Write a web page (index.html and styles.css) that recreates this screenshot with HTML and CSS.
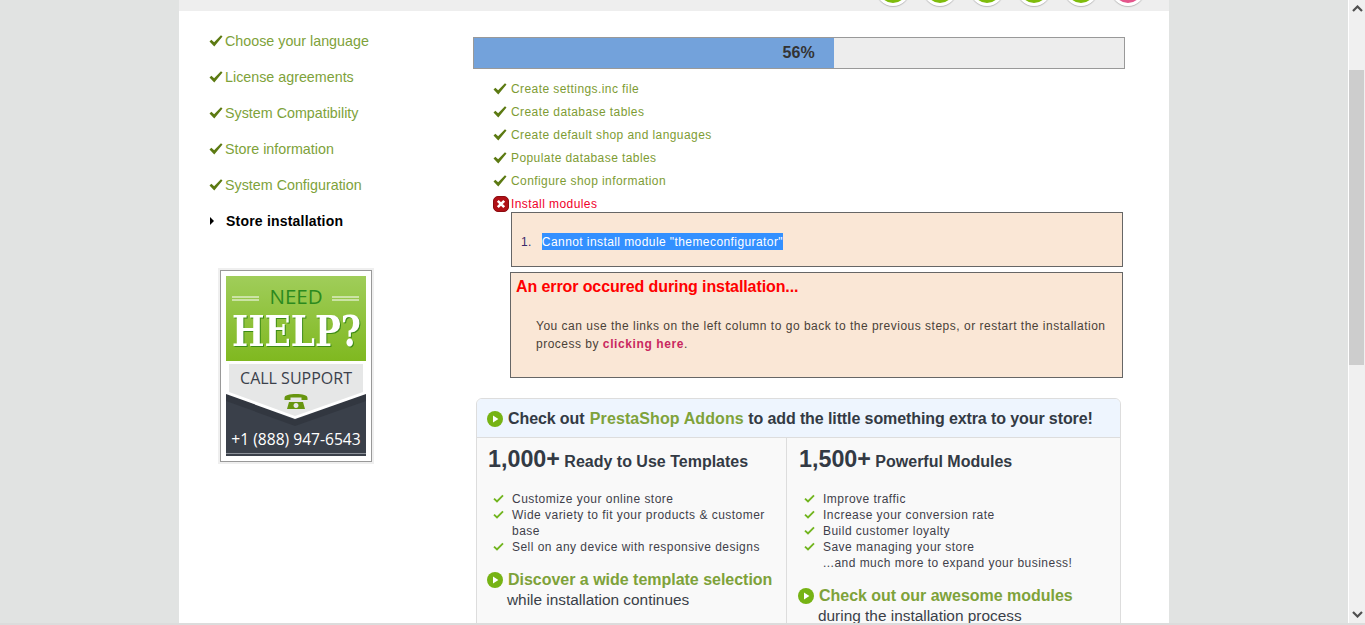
FILE: index.html
```html
<!DOCTYPE html>
<html lang="en">
<head>
<meta charset="utf-8">
<title>PrestaShop Installation</title>
<link rel="stylesheet" href="styles.css">
</head>
<body>
<svg class="defs" width="0" height="0" aria-hidden="true">
  <defs>
    <symbol id="check" viewBox="0 0 16 14"><path d="M0.4 7.6 L2.6 5.6 L5.8 8.4 L13.8 0.4 L15.6 1.8 L6 13.4 Z" fill="#5c7a12"/></symbol>
    <symbol id="tick" viewBox="0 0 11 9"><path d="M1 4.6 L4 7.4 L10 1.4" fill="none" stroke="#72b51f" stroke-width="1.9"/></symbol>
    <symbol id="play" viewBox="0 0 16 16"><circle cx="8" cy="8" r="8" fill="#76b314"/><path d="M6 4.6 L11.4 8 L6 11.4 Z" fill="#fff"/></symbol>
  </defs>
</svg>
<div class="viewport">
  <div class="stage">
    <div class="page">
      <div class="topbar">
        <span class="dot"></span><span class="dot"></span><span class="dot"></span><span class="dot"></span><span class="dot"></span><span class="dot dot-pink"></span>
      </div>
      <div class="columns">
        <aside class="sidebar">
          <ul class="nav">
            <li class="nav-item"><svg class="nav-check"><use href="#check"/></svg>Choose your language</li>
            <li class="nav-item"><svg class="nav-check"><use href="#check"/></svg>License agreements</li>
            <li class="nav-item"><svg class="nav-check"><use href="#check"/></svg>System Compatibility</li>
            <li class="nav-item"><svg class="nav-check"><use href="#check"/></svg>Store information</li>
            <li class="nav-item"><svg class="nav-check"><use href="#check"/></svg>System Configuration</li>
            <li class="nav-item nav-current"><span class="arrow"></span>Store installation</li>
          </ul>
          <div class="help-frame">
            <svg class="help" viewBox="0 0 140 180" width="140" height="180" role="img" aria-label="Need help? Call support">
              <defs>
                <linearGradient id="g" x1="0" y1="0" x2="0" y2="1"><stop offset="0" stop-color="#a0cd5a"/><stop offset="1" stop-color="#7fb81f"/></linearGradient>
              </defs>
              <rect width="140" height="180" fill="#3a404a"/>
              <rect width="140" height="86" fill="url(#g)"/>
              <path d="M6 21h27M6 24h27M106 21h27M106 24h27" stroke="#fff" stroke-width="1"/>
              <text x="70" y="28" class="need">NEED</text>
              <text x="70.500" y="70" class="helpword" textLength="129" lengthAdjust="spacingAndGlyphs">HELP?</text>
              <path d="M0 117 L69 144 L140 117 L140 125 L69 150 L0 125Z" fill="#323740"/>
              <path d="M0 85H140V118L69 143L0 118Z" fill="#fff"/>
              <path d="M3 88H137V116L69 140L3 116Z" fill="#e6e7e7"/>
              <text x="70" y="108" class="call">CALL SUPPORT</text>
              <path d="M58.500 122c0-3 5-4 11.500-4s11.500 1 11.500 4v2h-6v-2.500h-11v2.500h-6zM63 126h14l2 7h-18zM70 127a2.500 2.500 0 1 0 .01 0z" fill="#67950f" fill-rule="evenodd"/>
              <text x="70" y="169" class="phone">+1 (888) 947-6543</text>
              <rect y="177" width="140" height="1" fill="#8d929a"/>
            </svg>
          </div>
        </aside>
        <main class="content">
          <div class="progress"><div class="progress-fill"><span class="progress-label">56%</span></div></div>
          <ul class="steps">
            <li class="step"><svg class="step-icon"><use href="#check"/></svg>Create settings.inc file</li>
            <li class="step"><svg class="step-icon"><use href="#check"/></svg>Create database tables</li>
            <li class="step"><svg class="step-icon"><use href="#check"/></svg>Create default shop and languages</li>
            <li class="step"><svg class="step-icon"><use href="#check"/></svg>Populate database tables</li>
            <li class="step"><svg class="step-icon"><use href="#check"/></svg>Configure shop information</li>
            <li class="step step-error">
              <svg class="err-icon" viewBox="0 0 16 16"><rect x=".5" y=".5" width="15" height="15" rx="4.500" fill="#b01016" stroke="#8a0c10"/><path d="M4.800 4.800l6.400 6.400M11.200 4.800l-6.400 6.400" stroke="#fff" stroke-width="2.600"/></svg>Install modules
            </li>
          </ul>
          <div class="error-list">
            <ol class="error-items"><li><span class="selected">Cannot install module "themeconfigurator"</span></li></ol>
          </div>
          <div class="error-box">
            <h2 class="error-title">An error occured during installation...</h2>
            <p class="error-text">You can use the links on the left column to go back to the previous steps, or restart the installation process by <a class="error-link">clicking here</a>.</p>
          </div>
          <section class="addons">
            <header class="addons-head"><svg class="play"><use href="#play"/></svg><span>Check out <b class="green">PrestaShop Addons</b> to add the little something extra to your store!</span></header>
            <div class="addons-body">
              <div class="addon-col addon-col-first">
                <h3 class="addon-title"><span class="big">1,000+</span> Ready to Use Templates</h3>
                <ul class="ticks">
                  <li class="tick"><svg class="tick-icon"><use href="#tick"/></svg>Customize your online store</li>
                  <li class="tick"><svg class="tick-icon"><use href="#tick"/></svg>Wide variety to fit your products &amp; customer base</li>
                  <li class="tick"><svg class="tick-icon"><use href="#tick"/></svg>Sell on any device with responsive designs</li>
                </ul>
                <div class="cta"><svg class="play"><use href="#play"/></svg><div><div class="cta-main">Discover a wide template selection</div><div class="cta-sub">while installation continues</div></div></div>
              </div>
              <div class="addon-col">
                <h3 class="addon-title"><span class="big">1,500+</span> Powerful Modules</h3>
                <ul class="ticks">
                  <li class="tick"><svg class="tick-icon"><use href="#tick"/></svg>Improve traffic</li>
                  <li class="tick"><svg class="tick-icon"><use href="#tick"/></svg>Increase your conversion rate</li>
                  <li class="tick"><svg class="tick-icon"><use href="#tick"/></svg>Build customer loyalty</li>
                  <li class="tick"><svg class="tick-icon"><use href="#tick"/></svg>Save managing your store</li>
                  <li class="tick tick-plain">...and much more to expand your business!</li>
                </ul>
                <div class="cta"><svg class="play"><use href="#play"/></svg><div><div class="cta-main">Check out our awesome modules</div><div class="cta-sub">during the installation process</div></div></div>
              </div>
            </div>
          </section>
        </main>
      </div>
    </div>
    <div class="scrollbar">
      <div class="sb-btn"><svg width="11" height="7" viewBox="0 0 11 7"><path d="M1 6 L5.500 1.500 L10 6" fill="none" stroke="#505050" stroke-width="2.200"/></svg></div>
      <div class="sb-track"><div class="sb-thumb"></div></div>
      <div class="sb-btn"><svg width="11" height="7" viewBox="0 0 11 7"><path d="M1 1 L5.500 5.500 L10 1" fill="none" stroke="#505050" stroke-width="2.200"/></svg></div>
    </div>
  </div>
  <div class="window-edge"></div>
</div>
</body>
</html>
```
FILE: styles.css
```css
* { box-sizing: border-box; }
html, body { margin: 0; padding: 0; height: 100%; overflow: hidden; }
body { font-family: "Liberation Sans", Arial, sans-serif; background: #e1e3e2; color: #383b44; }
ul, ol { margin: 0; padding: 0; list-style: none; }
.defs { display: block; height: 0; }
.viewport { height: 625px; display: flex; flex-direction: column; overflow: hidden; }
.stage { flex: 1; min-height: 0; display: flex; overflow: hidden; }
.window-edge { height: 2px; background: #dcdcdc; }
.page { flex: 1; min-width: 0; display: flex; flex-direction: column; align-items: center; overflow: hidden; }
.topbar { width: 990px; height: 11px; flex: none; background: #eeeeee; display: flex; justify-content: flex-end; gap: 13px; padding-right: 24px; overflow: hidden; }
.dot { flex: none; width: 34px; height: 34px; margin-top: -28px; border-radius: 50%; background: #7fbc0c; border: 3px solid #fff; box-shadow: 0 1px 1px #bbb; }
.dot-pink { background: #e4568c; }
.columns { width: 990px; flex: 1; min-height: 0; background: #fff; display: flex; overflow: hidden; }
.sidebar { width: 294px; flex: none; padding: 12px 0 0 30px; }
.nav { display: flex; flex-direction: column; }
.nav-item { height: 36px; display: flex; align-items: center; font-size: 14.3px; color: #7ea23a; }
.nav-check { width: 14px; height: 12px; margin-right: 2px; flex: none; }
.nav-current { font-weight: 700; font-size: 14px; color: #000; letter-spacing: .2px; }
.arrow { width: 0; height: 0; margin: 0 12px 0 1px; border-left: 4px solid #000; border-top: 4px solid transparent; border-bottom: 4px solid transparent; }
.help-frame { width: 152px; height: 192px; margin: 31px 0 0 11px; border: 1px solid #999; outline: 2px solid #efefef; background: #fff; padding: 5px; }
.help { display: block; }
.need { font: 400 20.5px "Open Sans", sans-serif; fill: #2c8a1e; text-anchor: middle; }
.helpword { font: 700 42px "DejaVu Serif Condensed", "DejaVu Serif", serif; fill: #fff; text-anchor: middle; filter: drop-shadow(1px 1px 0 #3d8b16); }
.call { font: 400 16px "Open Sans", sans-serif; fill: #3b414b; text-anchor: middle; }
.phone { font: 400 15.6px "Open Sans", sans-serif; fill: #fff; text-anchor: middle; }
.content { flex: none; width: 652px; padding-top: 26px; }
.progress { height: 32px; border: 1px solid #999; background: #ededed; }
.progress-fill { width: 360px; height: 100%; background: #73a2db; display: flex; align-items: center; justify-content: flex-end; padding-right: 19px; }
.progress-label { font-size: 16px; font-weight: 700; color: #333; letter-spacing: .2px; }
.steps { padding: 8px 0 0 20px; }
.step { height: 23px; display: flex; align-items: center; font-size: 12px; color: #7e9c33; letter-spacing: .42px; }
.step-icon { width: 14px; height: 12px; margin-right: 4px; flex: none; }
.step-error { color: #f0002a; }
.err-icon { width: 16px; height: 16px; margin-right: 2px; flex: none; }
.error-list { margin: -3px 2px 0 38px; height: 55px; border: 1px solid #666; background: #fae7d6; display: flex; align-items: center; padding: 4px 0 0 9px; }
.error-items { list-style: none; font-size: 12px; letter-spacing: .42px; }
.error-items li::before { content: "1."; color: #3a2a6a; margin-right: 10px; }
.selected { background: #3390ff; color: #fff; padding: 2px 0 1px; }
.error-box { margin: 5px 2px 0 37px; height: 106px; border: 1px solid #666; background: #fae7d6; padding: 4px 5px; }
.error-title { margin: 0; font-size: 16px; line-height: 19px; color: #f00; letter-spacing: -.1px; }
.error-text { margin: 21px 10px 0 20px; font-size: 12px; line-height: 18px; letter-spacing: .5px; color: #4a4238; }
.error-link { font-weight: 700; color: #c9275f; letter-spacing: .6px; }
.addons { margin: 20px 4px 0 3px; height: 260px; border: 1px solid #dddddd; border-radius: 6px 6px 0 0; background: #f9f9f9; overflow: hidden; }
.addons-head { height: 39px; display: flex; align-items: center; gap: 5px; padding: 1px 0 0 10px; background: #eef5fe; border-bottom: 1px solid #ddd; font-size: 16px; font-weight: 700; color: #333a44; letter-spacing: -.1px; }
.green { color: #7ea23a; font-weight: 700; letter-spacing: .1px; margin-left: 1px; }
.play { width: 16px; height: 16px; flex: none; }
.addons-body { display: flex; }
.addon-col { flex: 1; min-width: 0; padding: 6px 10px 0 12px; height: 220px; }
.addon-col-first { flex: none; width: 310px; padding-left: 11px; border-right: 1px solid #ddd; }
.addon-title { margin: 0; font-size: 16px; line-height: 30px; color: #333a44; }
.big { font-size: 23.3px; }
.ticks { margin-top: 14px; padding-left: 5px; }
.tick { font-size: 12px; line-height: 16px; padding-left: 19px; position: relative; letter-spacing: .47px; color: #3f3f4a; }
.tick-icon { width: 11px; height: 9px; position: absolute; left: 0; top: 3px; }
.cta { display: flex; gap: 5px; margin: 15px 0 0 -1px; }
.cta .play { margin-top: 2px; }
.cta-main { font-size: 16px; font-weight: 700; line-height: 20px; color: #7ea23a; letter-spacing: -.02px; }
.cta-sub { font-size: 15.4px; line-height: 19px; color: #3a3f48; margin-left: -1px; }
.scrollbar { width: 17px; flex: none; display: flex; flex-direction: column; background: #f0f0f0; border-left: 1px solid #fff; }
.sb-btn { height: 17px; flex: none; display: flex; align-items: center; justify-content: center; }
.sb-track { flex: 1; padding-top: 53px; }
.sb-thumb { width: 15px; height: 295px; background: #cdcdcd; }
```
